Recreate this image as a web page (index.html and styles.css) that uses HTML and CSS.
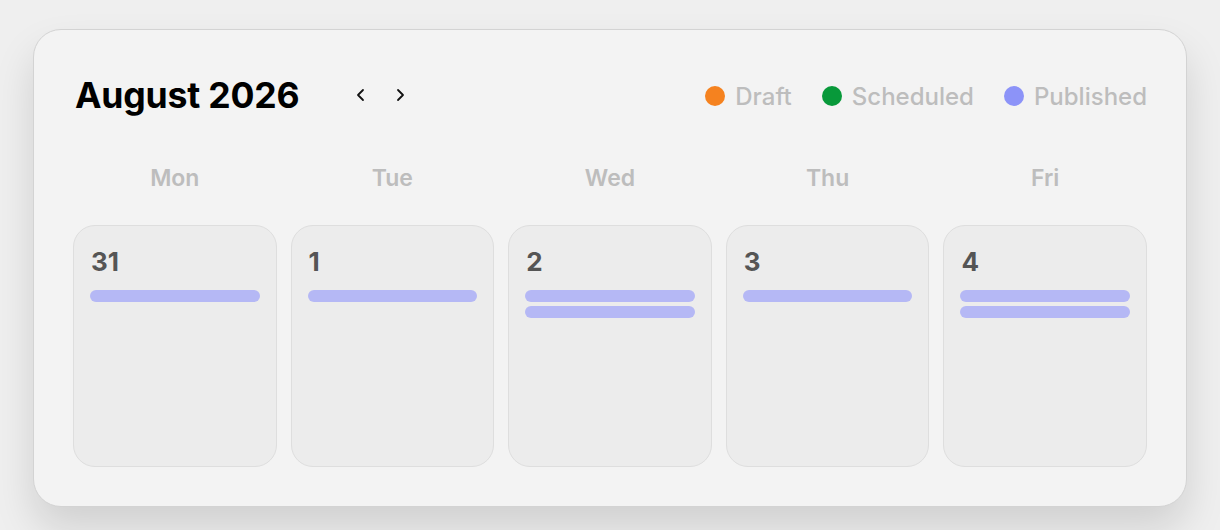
FILE: index.html
```html
<!DOCTYPE html>
<html lang="en">
<head>
    <meta charset="UTF-8">
    <meta name="viewport" content="width=device-width, initial-scale=1.0">
    <title>Content Calendar</title>
    <link rel="stylesheet" href="styles.css">
</head>
<body>

    <div class="page">
        <div class="calendar">

            <!-- header: month + nav + legend -->
            <div class="cal-header">
                <div class="cal-title">
                    <h1>August 2026</h1>
                    <button class="nav-btn" aria-label="Previous month">
                        <svg width="12" height="14" viewBox="0 0 12 14"><path d="M8 2 L3 7 L8 12" fill="none" stroke="#111" stroke-width="1.8" stroke-linecap="round" stroke-linejoin="round"/></svg>
                    </button>
                    <button class="nav-btn" aria-label="Next month">
                        <svg width="12" height="14" viewBox="0 0 12 14"><path d="M4 2 L9 7 L4 12" fill="none" stroke="#111" stroke-width="1.8" stroke-linecap="round" stroke-linejoin="round"/></svg>
                    </button>
                </div>
                <div class="legend">
                    <span class="legend-item"><span class="dot draft"></span>Draft</span>
                    <span class="legend-item"><span class="dot scheduled"></span>Scheduled</span>
                    <span class="legend-item"><span class="dot published"></span>Published</span>
                </div>
            </div>

            <!-- weekday labels -->
            <div class="weekdays">
                <div>Mon</div>
                <div>Tue</div>
                <div>Wed</div>
                <div>Thu</div>
                <div>Fri</div>
            </div>

            <!-- days -->
            <div class="days">
                <div class="day">
                    <div class="day-num">31</div>
                    <div class="post published"></div>
                </div>
                <div class="day">
                    <div class="day-num">1</div>
                    <div class="post published"></div>
                </div>
                <div class="day">
                    <div class="day-num">2</div>
                    <div class="post published"></div>
                    <div class="post published"></div>
                </div>
                <div class="day">
                    <div class="day-num">3</div>
                    <div class="post published"></div>
                </div>
                <div class="day">
                    <div class="day-num">4</div>
                    <div class="post published"></div>
                    <div class="post published"></div>
                </div>
            </div>

        </div>
    </div>

</body>
</html>
```

FILE: styles.css
```css
/* base */
body, html {
    margin: 0;
    padding: 0;
    font-family: Inter, "Liberation Sans", Arial, sans-serif;
    background-color: #efefef;
    color: #000;
}
.page {
    padding: 29px 33px;
}
.calendar {
    background-color: #f3f3f3;
    border: 1px solid #d3d3d3;
    border-radius: 28px;
    padding: 39px;
    box-shadow: 0 22px 40px rgba(0, 0, 0, 0.13);
}

/* header */
.cal-header {
    display: flex;
    justify-content: space-between;
    align-items: center;
    height: 52px;
}
.cal-title {
    display: flex;
    align-items: center;
}
h1 {
    margin: 0 46px 0 2px;
    font-size: 35.6px;
    font-weight: 700;
    letter-spacing: -0.2px;
}
.nav-btn {
    width: 32px;
    height: 32px;
    margin-right: 7px;
    padding: 0;
    border: none;
    background: none;
    display: flex;
    align-items: center;
    justify-content: center;
    cursor: pointer;
}
.legend {
    display: flex;
    align-items: center;
    gap: 30px;
    padding-top: 2px;
}
.legend-item {
    display: flex;
    align-items: center;
    gap: 10px;
    font-size: 24px;
    font-weight: 500;
    color: #bdbdbd;
}
.dot {
    width: 20px;
    height: 20px;
    border-radius: 50%;
}
.dot.draft { background-color: #f5821f; }
.dot.scheduled { background-color: #08993a; }
.dot.published { background-color: #8c93f8; }

/* weekday row */
.weekdays {
    display: grid;
    grid-template-columns: repeat(5, 1fr);
    gap: 14px;
    margin-top: 40px;
    margin-bottom: 30px;
    line-height: 34px;
    text-align: center;
    font-size: 23px;
    font-weight: 600;
    color: #bdbdbd;
}

/* day cards */
.days {
    display: grid;
    grid-template-columns: repeat(5, 1fr);
    gap: 14px;
}
.day {
    height: 242px;
    box-sizing: border-box;
    background-color: #ececec;
    border: 1px solid #dedede;
    border-radius: 22px;
    padding: 20px 16px 16px;
}
.day-num {
    font-size: 26px;
    font-weight: 700;
    line-height: 32px;
    color: #555;
    margin-bottom: 12px;
    padding-left: 1px;
}
.post {
    height: 12px;
    border-radius: 6px;
    margin-bottom: 4px;
}
.post.published { background-color: #b5b8f5; }
```
